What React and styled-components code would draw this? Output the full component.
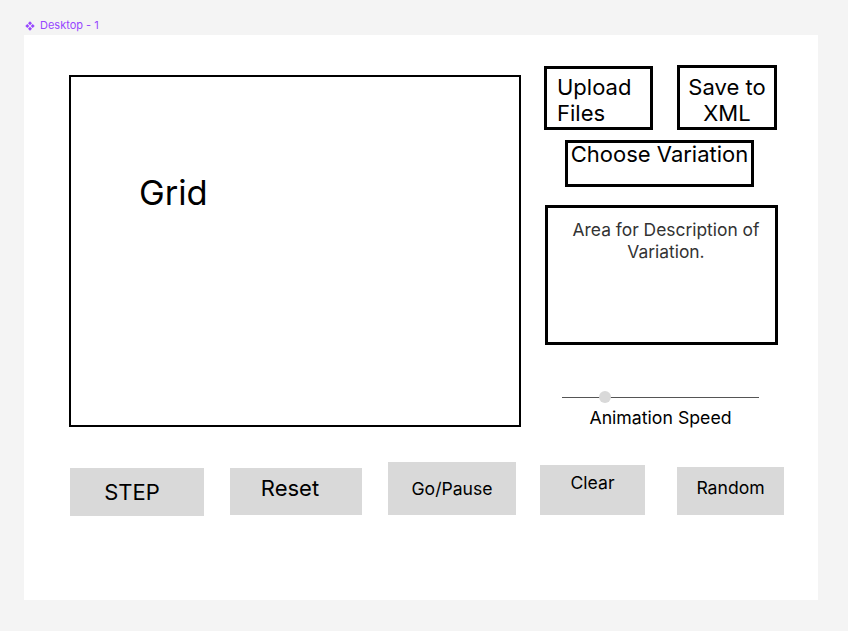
import React from 'react'
import styled, { createGlobalStyle } from 'styled-components'

const GlobalStyle = createGlobalStyle`
  html, body {
    margin: 0;
    padding: 0;
    background: #f4f4f4;
    font-family: Inter, 'Noto Sans', sans-serif;
  }
`

const Page = styled.div`
  width: 848px;
  height: 631px;
  padding: 19px 0 0 24px;
  box-sizing: border-box;
  overflow: hidden;
`

const FrameLabel = styled.div`
  display: flex;
  align-items: center;
  gap: 5px;
  height: 13px;
  padding-left: 1px;
  font-size: 11px;
  line-height: 13px;
  color: #9747ff;
`

const Frame = styled.div`
  margin-top: 3px;
  width: 794px;
  height: 565px;
  background: #fff;
  box-sizing: border-box;
  padding: 30px 0 0 45px;
`

const TopArea = styled.div`
  display: flex;
  align-items: flex-start;
`

const GridBox = styled.div`
  margin-top: 10px;
  width: 452px;
  height: 352px;
  box-sizing: border-box;
  border: 2px solid #000;
  padding: 95px 0 0 68px;
  font-size: 34.5px;
  color: #000;
`

const SideColumn = styled.div`
  margin-left: 23px;
  width: 236px;
  display: flex;
  flex-direction: column;
  align-items: flex-start;
`

const TopButtons = styled.div`
  display: flex;
  align-items: flex-start;
`

const OutlineButton = styled.div`
  margin-top: ${p => p.$mt}px;
  margin-left: ${p => p.$ml || 0}px;
  width: ${p => p.$w}px;
  height: ${p => p.$h}px;
  box-sizing: border-box;
  border: 3px solid #000;
  padding: ${p => p.$pad};
  font-size: 22px;
  line-height: ${p => p.$lh || 26}px;
  text-align: ${p => p.$align || 'left'};
  color: #000;
`

const DescriptionBox = styled.div`
  margin-top: 18px;
  margin-left: 1px;
  width: 233px;
  height: 140px;
  box-sizing: border-box;
  border: 3px solid #000;
  padding: 11px 0 0 9px;
  font-size: 17.4px;
  line-height: 22px;
  text-align: center;
  color: #333;
`

const SpeedControl = styled.div`
  margin-top: 46px;
  margin-left: 18px;
  width: 197px;
  display: flex;
  flex-direction: column;
  align-items: center;
`

const Track = styled.div`
  position: relative;
  width: 100%;
  height: 12px;
  &::before {
    content: '';
    position: absolute;
    left: 0;
    right: 0;
    top: 6px;
    height: 1px;
    background: #555;
  }
`

const Thumb = styled.div`
  position: absolute;
  top: 0;
  left: ${p => p.$pos}px;
  width: 12px;
  height: 12px;
  border-radius: 50%;
  background: #d9d9d9;
`

const SpeedLabel = styled.div`
  margin-top: 4px;
  font-size: 17.7px;
  line-height: 21px;
  color: #000;
`

const ControlRow = styled.div`
  margin-top: 34px;
  display: flex;
  align-items: flex-end;
`

const GrayButton = styled.div`
  margin-left: ${p => p.$ml}px;
  margin-bottom: ${p => p.$mb || 0}px;
  width: ${p => p.$w}px;
  height: ${p => p.$h}px;
  background: #d9d9d9;
  display: flex;
  justify-content: center;
  align-items: center;
  padding-bottom: ${p => p.$lift || 0}px;
  padding-right: ${p => p.$shift || 0}px;
  box-sizing: border-box;
  font-size: ${p => p.$fs}px;
  color: #000;
`

const ComponentIcon = () => (
  <svg width="10" height="10" viewBox="0 0 10 10" fill="#9747ff">
    <path d="M5 0.3 L7 2.3 L5 4.3 L3 2.3 Z" />
    <path d="M2.3 3 L4.3 5 L2.3 7 L0.3 5 Z" />
    <path d="M7.7 3 L9.7 5 L7.7 7 L5.7 5 Z" />
    <path d="M5 5.7 L7 7.7 L5 9.7 L3 7.7 Z" />
  </svg>
)

const controls = [
  { label: 'STEP', w: 134, h: 48, ml: 1, fs: 22, lift: 0, shift: 10, mb: -1 },
  { label: 'Reset', w: 132, h: 47, ml: 26, fs: 22, lift: 7, shift: 12 },
  { label: 'Go/Pause', w: 128, h: 53, ml: 26, fs: 17.6, lift: 0 },
  { label: 'Clear', w: 105, h: 50, ml: 24, fs: 17.6, lift: 15 },
  { label: 'Random', w: 107, h: 48, ml: 32, fs: 17.6, lift: 8 },
]

export default function App() {
  return (
    <>
      <GlobalStyle />
      <Page>
        <FrameLabel>
          <ComponentIcon />
          Desktop - 1
        </FrameLabel>
        <Frame>
          <TopArea>
            <GridBox>Grid</GridBox>
            <SideColumn>
              <TopButtons>
                <OutlineButton $mt={1} $w={109} $h={64} $pad="5px 0 0 10px">
                  Upload
                  <br />
                  Files
                </OutlineButton>
                <OutlineButton $mt={0} $ml={24} $w={100} $h={65} $pad="6px 0 0 0" $align="center">
                  Save to
                  <br />
                  XML
                </OutlineButton>
              </TopButtons>
              <OutlineButton $mt={10} $ml={21} $w={189} $h={47} $pad="2px 0 0 0" $lh={18} $align="center">
                Choose Variation
              </OutlineButton>
              <DescriptionBox>Area for Description of Variation.</DescriptionBox>
              <SpeedControl>
                <Track>
                  <Thumb $pos={37} />
                </Track>
                <SpeedLabel>Animation Speed</SpeedLabel>
              </SpeedControl>
            </SideColumn>
          </TopArea>
          <ControlRow>
            {controls.map(c => (
              <GrayButton
                key={c.label}
                $w={c.w}
                $h={c.h}
                $ml={c.ml}
                $fs={c.fs}
                $lift={c.lift}
                $shift={c.shift}
                $mb={c.mb}
              >
                {c.label}
              </GrayButton>
            ))}
          </ControlRow>
        </Frame>
      </Page>
    </>
  )
}
